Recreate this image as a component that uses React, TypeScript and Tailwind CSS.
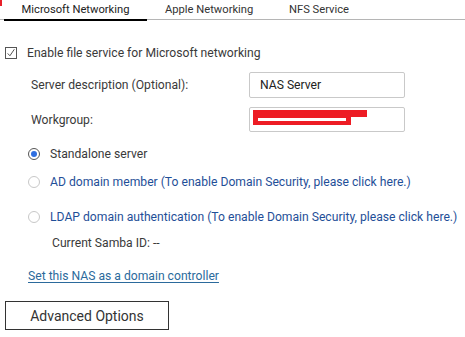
import { useState } from "react";

const tabs = ["Microsoft Networking", "Apple Networking", "NFS Service"];

const Radio = ({ checked }: { checked?: boolean }) => (
  <span
    className={`flex h-[12px] w-[12px] shrink-0 items-center justify-center rounded-full border ${
      checked ? "border-[#555]" : "border-[#c8c8c8]"
    } bg-white`}
  >
    {checked && <span className="h-[6px] w-[6px] rounded-full bg-[#2f6fe0]" />}
  </span>
);

export default function App() {
  const [active] = useState(0);

  return (
    <div className="relative h-[337px] w-[465px] overflow-hidden bg-white font-['Roboto',sans-serif] text-[#3a3a3a]">
      {/* red mark top-left */}
      <span className="absolute left-0 top-0 h-[6px] w-[2px] bg-[#e8202a]" />

      {/* Tabs */}
      <div className="flex h-[20px] border-b border-[#b5b5b5] pl-[4px]">
        {tabs.map((t, i) => (
          <div
            key={t}
            className={`flex h-[20px] items-center text-[11.2px] leading-none ${
              i === 0 ? "w-[143px] justify-center" : i === 1 ? "w-[142px] justify-start pl-[18px]" : "w-[100px] justify-start pl-0"
            } ${i === active ? "mb-[-1px] h-[21px] border-b-2 border-black text-[#222]" : "text-[#333]"}`}
          >
            {t}
          </div>
        ))}
      </div>

      <div className="pt-[25px] text-[12.15px] leading-[16px]">
        <label className="flex items-center gap-[10px] pl-[5px]">
          <span className="flex h-[12px] w-[12px] items-center justify-center border border-[#555]">
            <svg viewBox="0 0 12 12" className="h-[10px] w-[10px]">
              <path d="M2 6.5 L4.7 9.3 L10 1.5" fill="none" stroke="#444" strokeWidth="1.1" />
            </svg>
          </span>
          Enable file service for Microsoft networking
        </label>

        <div className="mt-[11px] flex items-center pl-[31px]">
          <span className="w-[218px]">Server description (Optional):</span>
          <div className="flex h-[26px] w-[156px] items-center rounded-[2px] border border-[#c9c9c9] px-[10px] text-[#222]">
            NAS Server
          </div>
        </div>

        <div className="mt-[9px] flex items-center pl-[31px]">
          <span className="w-[218px]">Workgroup:</span>
          <div className="relative h-[25px] w-[156px] rounded-[2px] border border-[#c9c9c9]">
            <span className="absolute left-[3px] top-[2px] h-[7px] w-[114px] bg-[#ed1c24]" />
            <span className="absolute left-[3px] top-[8px] h-[9px] w-[98px] bg-[#ed1c24]" />
            <span className="absolute left-[8px] top-[10px] h-[3px] w-[88px] bg-white" />
          </div>
        </div>

        <div className="mt-[14px] flex flex-col pl-[28px]">
          <div className="flex items-center gap-[10px]">
            <Radio checked />
            <span>Standalone server</span>
          </div>
          <div className="mt-[12px] flex items-center gap-[10px]">
            <Radio />
            <span className="text-[#1f4f98]">AD domain member (To enable Domain Security, please click here.)</span>
          </div>
          <div className="mt-[19px] flex items-center gap-[10px]">
            <Radio />
            <span className="whitespace-nowrap text-[#1f4f98]">
              LDAP domain authentication (To enable Domain Security, please click here.)
            </span>
          </div>
        </div>

        <div className="mt-[10px] pl-[52px]">Current Samba ID: --</div>

        <a className="mt-[17px] block pl-[28px] text-[#2b6a9c] underline underline-offset-2">
          Set this NAS as a domain controller
        </a>

        <button className="ml-[5px] mt-[17px] flex h-[29px] w-[164px] items-center justify-center border border-[#333] text-[14px] text-[#333]">
          Advanced Options
        </button>
      </div>
    </div>
  );
}
